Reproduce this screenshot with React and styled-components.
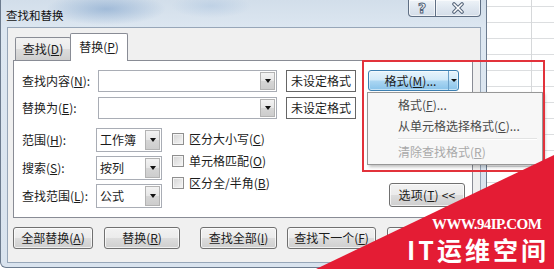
import React from "react";
import styled, { createGlobalStyle } from "styled-components";

const GlobalStyle = createGlobalStyle`
  html, body {
    margin: 0;
    padding: 0;
  }
  body {
    width: 554px;
    height: 269px;
    overflow: hidden;
    font-family: "Noto Sans CJK SC", sans-serif;
    font-size: 12px;
    color: #1b1b1b;
    background-color: #fff;
    background-image:
      linear-gradient(to right, transparent 531px, #d6d8da 531px, #d6d8da 532px, transparent 532px),
      repeating-linear-gradient(to bottom, transparent 0 6px, #dcdee0 6px 7px, transparent 7px 16px);
  }
`;

const Screen = styled.div`
  position: relative;
  width: 554px;
  height: 269px;
`;

const Window = styled.div`
  width: 487px;
  height: 268px;
  box-sizing: border-box;
  display: flex;
  flex-direction: column;
  padding: 0 5px 4px 6px;
  border: 1px solid #6c7b8e;
  border-top: none;
  border-radius: 0 0 6px 6px;
  background:
    radial-gradient(ellipse 60px 16px at 105px 9px, rgba(118, 156, 200, 0.55), transparent),
    radial-gradient(ellipse 40px 12px at 210px 6px, rgba(160, 188, 220, 0.4), transparent),
    linear-gradient(#d2deea, #dde7f1 30px, #d9e3ee);
`;

const TitleBar = styled.div`
  height: 27px;
  display: flex;
  align-items: flex-start;
`;

const Title = styled.div`
  margin: 9px 0 0 -1px;
  font-size: 11.5px;
  line-height: 12px;
  color: #111;
`;

const CaptionButtons = styled.div`
  margin-left: auto;
  display: flex;
`;

const CaptionButton = styled.div`
  width: ${(p) => p.$w}px;
  height: 17px;
  box-sizing: border-box;
  display: flex;
  align-items: center;
  justify-content: center;
  border: 1px solid #5f6f84;
  border-top: none;
  border-left-width: ${(p) => (p.$first ? 1 : 0)}px;
  border-radius: ${(p) => (p.$first ? "0 0 0 4px" : "0 0 4px 0")};
  background: linear-gradient(#eef3f8, #dfe7f0 50%, #d3dde8);
  box-shadow: inset 0 0 0 1px rgba(255, 255, 255, 0.6);
`;

const HelpGlyph = styled.span`
  font-family: "DejaVu Sans", sans-serif;
  font-weight: bold;
  font-size: 14px;
  line-height: 14px;
  color: #fff;
  -webkit-text-stroke: 1px #55657a;
`;

const Client = styled.div`
  flex: 1;
  display: flex;
  flex-direction: column;
  padding: 5px 7px 0 5px;
  border: 1px solid #97a6b8;
  background: #f0f0f0;
`;

const TabStrip = styled.div`
  display: flex;
  align-items: flex-end;
  height: 28px;
  padding-left: 2px;
  margin-bottom: -1px;
  position: relative;
  z-index: 1;
`;

const Tab = styled.div`
  box-sizing: border-box;
  width: ${(p) => (p.$active ? 58 : 56)}px;
  height: ${(p) => (p.$active ? 28 : 23)}px;
  margin-bottom: ${(p) => (p.$active ? 0 : 1)}px;
  margin-left: ${(p) => (p.$active ? -1 : 0)}px;
  display: flex;
  align-items: center;
  justify-content: center;
  padding-bottom: ${(p) => (p.$active ? 2 : 0)}px;
  border: 1px solid #898c95;
  border-bottom: none;
  border-radius: 2px 2px 0 0;
  background: ${(p) =>
    p.$active ? "#fff" : "linear-gradient(#f2f2f2, #ebebeb 50%, #dddddd 50%, #cfcfcf)"};
  line-height: 14px;
`;

const TabPage = styled.div`
  height: 158px;
  box-sizing: border-box;
  border: 1px solid #898c95;
  background: #fff;
  padding: 9px 7px 0 8px;
  display: flex;
  flex-direction: column;
`;

const FieldGrid = styled.div`
  display: grid;
  grid-template-columns: 67px 179px 70px 94px;
  grid-auto-rows: 22px;
  column-gap: 9px;
  row-gap: 5px;
  align-items: center;
`;

const Label = styled.div`
  line-height: 14px;
  white-space: nowrap;
`;

const Combo = styled.div`
  height: ${(p) => p.$h || 22}px;
  box-sizing: border-box;
  display: flex;
  border: 1px solid #a9adb5;
  background: #fff;
`;

const ComboValue = styled.div`
  flex: 1;
  padding-left: 3px;
  display: flex;
  align-items: center;
  line-height: 14px;
`;

const ComboArrow = styled.div`
  width: 15px;
  margin: 1px;
  box-sizing: border-box;
  border: 1px solid #b3b3b3;
  background: linear-gradient(#f3f3f3, #e6e6e6 50%, #d6d6d6 50%, #cdcdcd);
  display: flex;
  align-items: center;
  justify-content: center;

  &::after {
    content: "";
    border-left: 3.5px solid transparent;
    border-right: 3.5px solid transparent;
    border-top: 4px solid #111;
  }
`;

const PreviewBox = styled.div`
  height: 22px;
  box-sizing: border-box;
  border: 1px solid #666;
  background: #fff;
  display: flex;
  align-items: center;
  justify-content: center;
  line-height: 14px;
`;

const FormatButton = styled.div`
  height: 21px;
  margin: -1px 0 0 3px;
  box-sizing: border-box;
  display: flex;
  border: 1px solid #3c7fb1;
  border-radius: 3px;
  background: linear-gradient(#e7f4fc, #d2eaf9 45%, #a9d5f2 55%, #88c3ea);
  box-shadow: inset 0 0 0 1px rgba(255, 255, 255, 0.5);
`;

const FormatLabel = styled.div`
  flex: 1;
  display: flex;
  align-items: center;
  justify-content: center;
  line-height: 14px;
  padding-left: 4px;
`;

const FormatArrow = styled.div`
  width: 9px;
  border-left: 1px solid #6a9fc7;
  display: flex;
  align-items: center;
  justify-content: center;

  &::after {
    content: "";
    border-left: 3px solid transparent;
    border-right: 3px solid transparent;
    border-top: 3px solid #111;
  }
`;

const Lower = styled.div`
  margin-top: 9px;
  display: flex;
  align-items: flex-start;
`;

const OptionGrid = styled.div`
  display: grid;
  grid-template-columns: 74px 66px;
  grid-auto-rows: 24px;
  row-gap: 4px;
  align-items: center;
`;

const Checks = styled.div`
  margin: 0 0 0 10px;
  display: flex;
  flex-direction: column;
`;

const CheckRow = styled.div`
  height: 22px;
  display: flex;
  align-items: center;
  gap: 5px;
  line-height: 14px;
`;

const CheckBox = styled.span`
  width: 12px;
  height: 12px;
  box-sizing: border-box;
  border: 1px solid #8f8f8f;
  background: linear-gradient(135deg, #d4d4d4, #f6f6f6);
  box-shadow: inset 0 0 0 1px #f4f4f4;
`;

const Button = styled.div`
  width: ${(p) => p.$w}px;
  height: ${(p) => p.$h || 22}px;
  margin-left: ${(p) => p.$ml || 0}px;
  box-sizing: border-box;
  display: flex;
  align-items: center;
  justify-content: center;
  border: 1px solid #707070;
  border-radius: 3px;
  background: linear-gradient(#f2f2f2, #ebebeb 50%, #dddddd 50%, #cfcfcf);
  box-shadow: inset 0 0 0 1px rgba(255, 255, 255, 0.7);
  line-height: 14px;
  white-space: nowrap;
`;

const OptionsButton = styled(Button)`
  margin-left: auto;
  margin-top: 55px;
  letter-spacing: 0.2px;
`;

const ButtonBar = styled.div`
  margin-top: 9px;
  display: flex;
`;

const Menu = styled.div`
  position: absolute;
  left: 367px;
  top: 92px;
  width: 176px;
  height: 73px;
  box-sizing: border-box;
  padding: 1px 2px;
  border: 1px solid #979797;
  background: #f7f7f7;
  box-shadow: 2px 2px 3px rgba(0, 0, 0, 0.25);
  display: flex;
  flex-direction: column;
  z-index: 2;
`;

const MenuItem = styled.div`
  height: 22px;
  display: flex;
  align-items: center;
  padding-left: 28px;
  line-height: 14px;
  color: ${(p) => (p.$disabled ? "#a9a9a9" : "#4a4a4a")};
`;

const MenuSeparator = styled.div`
  height: 1px;
  margin: 1px 3px 2px 28px;
  background: #e2e3e3;
  border-bottom: 1px solid #fff;
`;

const Highlight = styled.div`
  position: absolute;
  left: 362px;
  top: 60px;
  width: 183px;
  height: 112px;
  box-sizing: border-box;
  border: 2px solid #e2323b;
  z-index: 3;
  pointer-events: none;
`;

const Watermark = styled.div`
  position: absolute;
  right: 0;
  bottom: 0;
  width: 238px;
  height: 114px;
  box-sizing: border-box;
  padding-bottom: 6px;
  background: #e41c34;
  clip-path: polygon(100% 0, 100% 100%, 0 100%);
  display: flex;
  flex-direction: column;
  justify-content: flex-end;
  gap: 5px;
  color: #fff;
  z-index: 4;
`;

const SiteUrl = styled.div`
  margin-left: 116px;
  font-family: "Liberation Serif", serif;
  font-weight: bold;
  font-size: 15px;
  line-height: 14px;
  letter-spacing: -0.6px;
`;

const SiteName = styled.div`
  margin-left: 91px;
  font-family: "Noto Sans CJK SC", sans-serif;
  font-weight: bold;
  font-size: 25px;
  line-height: 27px;
  letter-spacing: 3px;
  white-space: nowrap;
`;

function Mn({ children }) {
  return <u>{children}</u>;
}

function CloseIcon() {
  return (
    <svg width="12" height="12" viewBox="0 0 12 12">
      <path d="M2 2 L10 10 M10 2 L2 10" stroke="#55657a" strokeWidth="3.6" strokeLinecap="round" />
      <path d="M2 2 L10 10 M10 2 L2 10" stroke="#fff" strokeWidth="1.6" strokeLinecap="round" />
    </svg>
  );
}

export default function App() {
  return (
    <Screen>
      <GlobalStyle />
      <Window>
        <TitleBar>
          <Title>查找和替换</Title>
          <CaptionButtons>
            <CaptionButton $w={28} $first>
              <HelpGlyph>?</HelpGlyph>
            </CaptionButton>
            <CaptionButton $w={45}>
              <CloseIcon />
            </CaptionButton>
          </CaptionButtons>
        </TitleBar>
        <Client>
          <TabStrip>
            <Tab>
              查找(<Mn>D</Mn>)
            </Tab>
            <Tab $active>
              替换(<Mn>P</Mn>)
            </Tab>
          </TabStrip>
          <TabPage>
            <FieldGrid>
              <Label>
                查找内容(<Mn>N</Mn>):
              </Label>
              <Combo>
                <ComboValue />
                <ComboArrow />
              </Combo>
              <PreviewBox>未设定格式</PreviewBox>
              <FormatButton>
                <FormatLabel>
                  格式(<Mn>M</Mn>)...
                </FormatLabel>
                <FormatArrow />
              </FormatButton>
              <Label>
                替换为(<Mn>E</Mn>):
              </Label>
              <Combo>
                <ComboValue />
                <ComboArrow />
              </Combo>
              <PreviewBox>未设定格式</PreviewBox>
            </FieldGrid>
            <Lower>
              <OptionGrid>
                <Label>
                  范围(<Mn>H</Mn>):
                </Label>
                <Combo $h={24}>
                  <ComboValue>工作簿</ComboValue>
                  <ComboArrow />
                </Combo>
                <Label>
                  搜索(<Mn>S</Mn>):
                </Label>
                <Combo $h={24}>
                  <ComboValue>按列</ComboValue>
                  <ComboArrow />
                </Combo>
                <Label>
                  查找范围(<Mn>L</Mn>):
                </Label>
                <Combo $h={24}>
                  <ComboValue>公式</ComboValue>
                  <ComboArrow />
                </Combo>
              </OptionGrid>
              <Checks>
                <CheckRow>
                  <CheckBox />
                  <span>
                    区分大小写(<Mn>C</Mn>)
                  </span>
                </CheckRow>
                <CheckRow>
                  <CheckBox />
                  <span>
                    单元格匹配(<Mn>O</Mn>)
                  </span>
                </CheckRow>
                <CheckRow>
                  <CheckBox />
                  <span>
                    区分全/半角(<Mn>B</Mn>)
                  </span>
                </CheckRow>
              </Checks>
              <OptionsButton $w={76} $h={24}>
                选项(<Mn>T</Mn>)&nbsp;&lt;&lt;
              </OptionsButton>
            </Lower>
          </TabPage>
          <ButtonBar>
            <Button $w={80}>
              全部替换(<Mn>A</Mn>)
            </Button>
            <Button $w={76} $ml={11}>
              替换(<Mn>R</Mn>)
            </Button>
            <Button $w={77} $ml={20}>
              查找全部(<Mn>I</Mn>)
            </Button>
            <Button $w={89} $ml={10}>
              查找下一个(<Mn>F</Mn>)
            </Button>
            <Button $w={76} $ml={11}>
              关闭
            </Button>
          </ButtonBar>
        </Client>
      </Window>
      <Menu>
        <MenuItem>
          格式(<Mn>F</Mn>)...
        </MenuItem>
        <MenuItem>
          从单元格选择格式(<Mn>C</Mn>)...
        </MenuItem>
        <MenuSeparator />
        <MenuItem $disabled>
          清除查找格式(<Mn>R</Mn>)
        </MenuItem>
      </Menu>
      <Highlight />
      <Watermark>
        <SiteUrl>WWW.94IP.COM</SiteUrl>
        <SiteName>IT运维空间</SiteName>
      </Watermark>
    </Screen>
  );
}
